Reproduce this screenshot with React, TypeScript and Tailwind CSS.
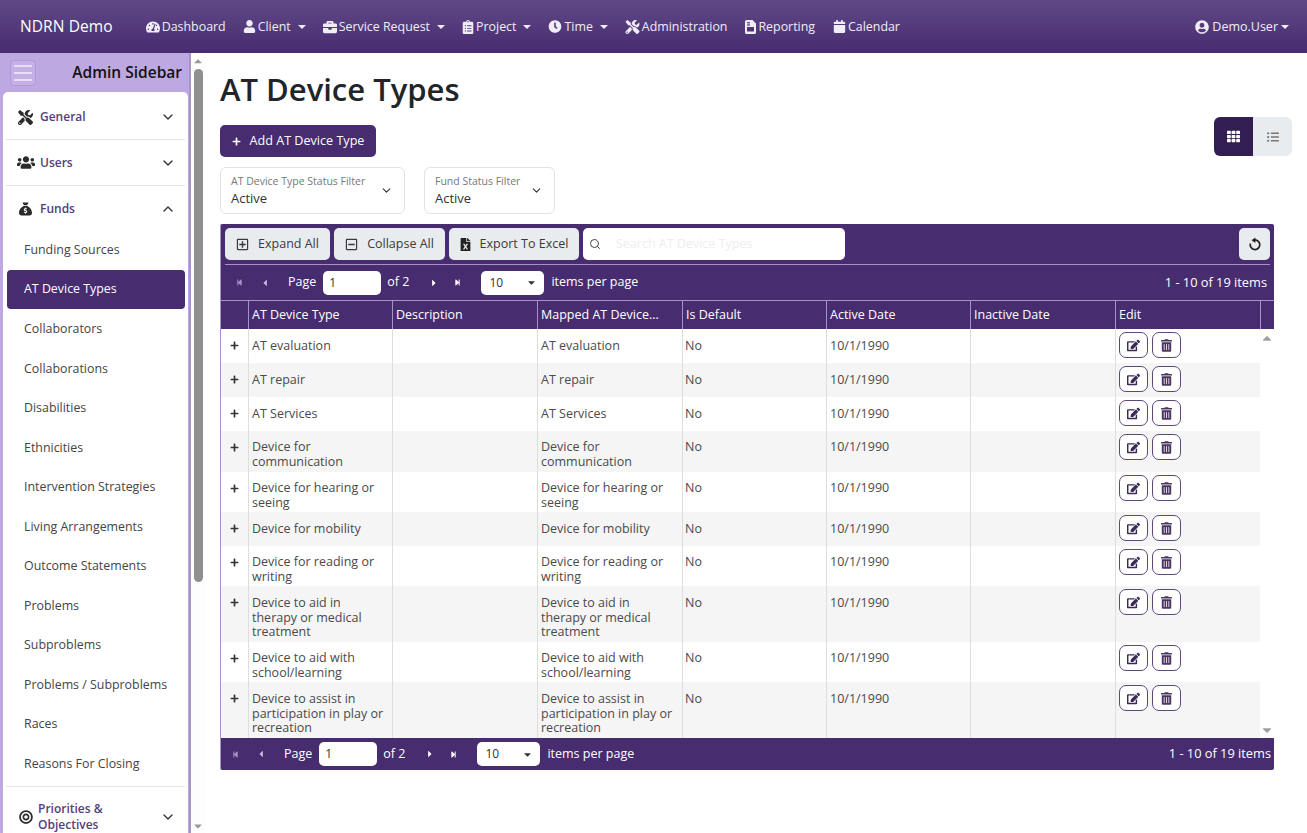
import { FaTachometerAlt, FaUser, FaBriefcase, FaClipboardList, FaClock, FaTools, FaCalendar, FaUserCircle, FaTh, FaListUl, FaUsers, FaBullseye, FaRegPlusSquare, FaRegMinusSquare, FaFileExcel, FaEdit, FaTrashAlt, FaPlus, FaStepBackward, FaStepForward, FaCaretLeft, FaCaretRight, FaCaretDown, FaCaretUp } from 'react-icons/fa';
import { FaSackDollar } from 'react-icons/fa6';
import { ChevronDown, ChevronUp, Search } from 'lucide-react';
import type { ReactNode } from 'react';

function ReportIcon() {
  return (
    <svg viewBox="0 0 11 14" className="w-[11px] h-[14px]">
      <path d="M1.5 0H7.5L11 3.5V12.5A1.5 1.5 0 0 1 9.5 14H1.5A1.5 1.5 0 0 1 0 12.5V1.5A1.5 1.5 0 0 1 1.5 0Z" fill="currentColor" />
      <rect x="2" y="7" width="7" height="4.5" fill="#4f3578" />
      <rect x="2" y="2.2" width="3" height="1.2" fill="#4f3578" />
      <rect x="2" y="4.4" width="3" height="1.2" fill="#4f3578" />
    </svg>
  );
}

function ReloadIcon() {
  return (
    <svg viewBox="0 0 14 14" className="w-[14px] h-[14px] text-[#222]">
      <path d="M5 3.4A4.8 4.8 0 1 1 2.4 6.4" fill="none" stroke="currentColor" strokeWidth="1.7" />
      <path d="M7.4 0.6V6L3.6 3.3Z" fill="currentColor" />
    </svg>
  );
}

function Caret() {
  return <span className="ml-[5px] w-0 h-0 border-x-[4px] border-x-transparent border-t-[4px] border-t-current" />;
}

const navItems: { label: string; icon: ReactNode; caret?: boolean; cls: string }[] = [
  { label: 'Dashboard', icon: <FaTachometerAlt className="w-[14px] h-[14px]" />, cls: 'ml-[33px]' },
  { label: 'Client', icon: <FaUser className="w-[13px] h-[13px]" />, caret: true, cls: 'ml-[17px]' },
  { label: 'Service Request', icon: <FaBriefcase className="w-[14px] h-[14px]" />, caret: true, cls: 'ml-[17px]' },
  { label: 'Project', icon: <FaClipboardList className="w-[12px] h-[14px]" />, caret: true, cls: 'ml-[17px]' },
  { label: 'Time', icon: <FaClock className="w-[14px] h-[13px]" />, caret: true, cls: 'ml-[17px]' },
  { label: 'Administration', icon: <FaTools className="w-[15px] h-[14px]" />, cls: 'ml-[17px]' },
  { label: 'Reporting', icon: <ReportIcon />, cls: 'ml-[18px]' },
  { label: 'Calendar', icon: <FaCalendar className="w-[13px] h-[13px]" />, cls: 'ml-[18px]' },
];

const subItems = ['Funding Sources', 'AT Device Types', 'Collaborators', 'Collaborations', 'Disabilities', 'Ethnicities', 'Intervention Strategies', 'Living Arrangements', 'Outcome Statements', 'Problems', 'Subproblems', 'Problems / Subproblems', 'Races', 'Reasons For Closing'];

const rows: { name: string[]; h: string }[] = [
  { name: ['AT evaluation'], h: 'h-[34px]' },
  { name: ['AT repair'], h: 'h-[34px]' },
  { name: ['AT Services'], h: 'h-[34px]' },
  { name: ['Device for', 'communication'], h: 'h-[41px]' },
  { name: ['Device for hearing or', 'seeing'], h: 'h-[40px]' },
  { name: ['Device for mobility'], h: 'h-[34px]' },
  { name: ['Device for reading or', 'writing'], h: 'h-[40px]' },
  { name: ['Device to aid in', 'therapy or medical', 'treatment'], h: 'h-[56px]' },
  { name: ['Device to aid with', 'school/learning'], h: 'h-[40px]' },
  { name: ['Device to assist in', 'participation in play or', 'recreation'], h: 'h-[56px]' },
];

const headers = [
  { label: 'AT Device Type', w: 'w-[144px]' },
  { label: 'Description', w: 'w-[145px]' },
  { label: 'Mapped AT Device...', w: 'w-[145px]' },
  { label: 'Is Default', w: 'w-[144px]' },
  { label: 'Active Date', w: 'w-[144px]' },
  { label: 'Inactive Date', w: 'w-[145px]' },
  { label: 'Edit', w: 'w-[145px]' },
];

function SideHead({ icon, label, open }: { icon: ReactNode; label: ReactNode; open?: boolean }) {
  return (
    <div className="flex items-center h-full pl-[9px] pr-[9px] text-[12px] font-semibold leading-[16px] text-[#54407c]">
      <span className="w-[21px] flex justify-center text-[#2b2b2b] shrink-0">{icon}</span>
      <span className="flex-1 ml-[4px]">{label}</span>
      {open ? <ChevronUp className="w-[16px] h-[16px] text-[#333]" /> : <ChevronDown className="w-[16px] h-[16px] text-[#333]" />}
    </div>
  );
}

function Pager({ offset }: { offset?: boolean }) {
  return (
    <div className={`flex items-center text-[12.5px] text-white ${offset ? 'pl-[11px] pr-[3px] h-[32px]' : 'pl-[15px] pr-[7px] h-[35px]'}`}>
      <FaStepBackward className="w-[7px] h-[7px] text-[#a594c2]" />
      <FaCaretLeft className="w-[10px] h-[10px] ml-[17px] text-[#c8bcdc]" />
      <span className="ml-[18px]">Page</span>
      <div className="ml-[7px] w-[58px] h-[24px] bg-white rounded-[5px] text-[#333] text-[12px] flex items-center pl-[6px]">1</div>
      <span className="ml-[6px]">of 2</span>
      <FaCaretRight className="w-[10px] h-[10px] ml-[20px] text-white" />
      <FaStepForward className="w-[7px] h-[7px] ml-[15px] text-white" />
      <div className="ml-[20px] w-[63px] h-[24px] bg-white rounded-[5px] text-[#333] text-[12px] flex items-center justify-between pl-[8px] pr-[7px]">
        <span>10</span>
        <FaCaretDown className="w-[11px] h-[11px] text-[#333]" />
      </div>
      <span className="ml-[7px]">items per page</span>
      <span className="ml-auto text-[12.8px]">1 - 10 of 19 items</span>
    </div>
  );
}

function ToolButton({ icon, label, w }: { icon: ReactNode; label: string; w: string }) {
  return (
    <div className={`${w} h-[32px] bg-[#e9ecef] rounded-[5px] flex items-center justify-center gap-[9px] text-[12.5px] text-[#3a3a3a]`}>
      {icon}
      <span>{label}</span>
    </div>
  );
}

export default function App() {
  return (
    <div className="w-[1307px] h-[833px] overflow-hidden bg-white font-['Open_Sans',sans-serif] flex flex-col">
      {/* Top nav */}
      <header className="h-[53px] shrink-0 bg-gradient-to-b from-[#604886] to-[#472c70] flex items-center pl-[20px] pr-[18px] text-white">
        <span className="text-[15.5px] tracking-[0.1px]">NDRN Demo</span>
        {navItems.map((n) => (
          <div key={n.label} className={`mt-[1px] flex items-center gap-[2px] text-[12.4px] text-[#f1edf7] ${n.cls}`}>
            {n.icon}
            <span>{n.label}</span>
            {n.caret && <Caret />}
          </div>
        ))}
        <div className="ml-auto mt-[1px] flex items-center gap-[3px] text-[12.5px] text-[#f1edf7]">
          <FaUserCircle className="w-[14px] h-[14px]" />
          <span>Demo.User</span>
          <span className="w-0 h-0 border-x-[4px] border-x-transparent border-t-[4px] border-t-current" />
        </div>
      </header>

      <div className="flex-1 flex min-h-0">
        {/* Sidebar */}
        <aside className="w-[191px] shrink-0 bg-[#bda8e1] flex flex-col overflow-hidden border-r-[2px] border-[#a596c6]">
          <div className="h-[39px] shrink-0 flex items-center pl-[10px] pr-[7px]">
            <div className="w-[26px] h-[26px] rounded-[4px] border border-[#b09ad8] bg-[#c4b0e6] flex flex-col justify-center gap-[5px] px-[3px]">
              <div className="h-[2px] bg-[#e8dff5]" />
              <div className="h-[2px] bg-[#e8dff5]" />
              <div className="h-[2px] bg-[#e8dff5]" />
            </div>
            <span className="ml-auto text-[15.5px] font-semibold text-[#111]">Admin Sidebar</span>
          </div>
          <div className="flex-1 ml-[3px] mr-[1px] bg-white rounded-t-[5px] overflow-hidden">
            <div className="h-[48px] pt-[3px] mx-[3px] border-b border-[#e6e6e6]"><SideHead icon={<FaTools className="w-[15px] h-[15px]" />} label="General" /></div>
            <div className="h-[46px] mx-[3px] border-b border-[#e6e6e6]"><SideHead icon={<FaUsers className="w-[18px] h-[15px]" />} label="Users" /></div>
            <div className="h-[45px] mx-[3px]"><SideHead icon={<FaSackDollar className="w-[13px] h-[14px]" />} label="Funds" open /></div>
            <div className="flex flex-col gap-[0.5px] pb-[2px]">
              {subItems.map((s) => (
                <div key={s} className={`h-[39px] ml-[4px] mr-[3px] pl-[17px] flex items-center text-[12.4px] rounded-[4px] ${s === 'AT Device Types' ? 'bg-[#472c70] text-white -translate-y-[1px]' : 'text-[#444]'}`}>
                  {s}
                </div>
              ))}
            </div>
            <div className="h-[62px] mx-[3px] border-t border-[#e6e6e6]">
              <SideHead icon={<FaBullseye className="w-[14px] h-[14px]" />} label={<span className="block w-[90px] -ml-[2px]">Priorities &amp; Objectives</span>} />
            </div>
          </div>
        </aside>

        {/* Page scrollbar */}
        <div className="w-[14px] shrink-0 flex flex-col items-center text-[#9a9a9a] bg-[#fdfdfd]">
          <FaCaretUp className="w-[12px] h-[12px] mt-[2px]" />
          <div className="w-[9px] h-[513px] mt-[2px] rounded-[5px] bg-[#8f8f8f]" />
          <FaCaretDown className="w-[12px] h-[12px] mt-auto mb-[1px]" />
        </div>

        {/* Main */}
        <main className="flex-1 min-w-0 pl-[15px] pr-[15px]">
          <div className="flex items-start">
            <div className="flex-1">
              <h1 className="mt-[14px] h-[44px] text-[31px] leading-[44px] font-semibold text-[#212529]">AT Device Types</h1>
              <div className="mt-[14px] w-[156px] h-[32px] bg-[#472c70] rounded-[5px] flex items-center justify-center gap-[9px] text-[12.6px] text-white">
                <FaPlus className="w-[9px] h-[9px]" />
                <span>Add AT Device Type</span>
              </div>
            </div>
            <div className="mt-[64px] flex h-[39px] rounded-[6px] overflow-hidden">
              <div className="w-[39px] bg-[#331e53] flex items-center justify-center"><FaTh className="w-[13px] h-[13px] text-white" /></div>
              <div className="w-[39px] bg-[#e9ecef] flex items-center justify-center"><FaListUl className="w-[12px] h-[12px] text-[#777]" /></div>
            </div>
          </div>

          <div className="mt-[10px] flex gap-[19px]">
            <div className="w-[185px] h-[47px] border border-[#e3e3e3] rounded-[6px] pl-[10px] pr-[11px] flex items-center">
              <div className="flex-1">
                <div className="text-[10.5px] leading-[14px] text-[#777] -mt-[1px] mb-[1px]">AT Device Type Status Filter</div>
                <div className="text-[13px] leading-[18px] text-[#333]">Active</div>
              </div>
              <ChevronDown className="w-[13px] h-[13px] text-[#333]" />
            </div>
            <div className="w-[131px] h-[47px] border border-[#e3e3e3] rounded-[6px] pl-[10px] pr-[11px] flex items-center">
              <div className="flex-1">
                <div className="text-[10.5px] leading-[14px] text-[#777] -mt-[1px] mb-[1px]">Fund Status Filter</div>
                <div className="text-[13px] leading-[18px] text-[#333]">Active</div>
              </div>
              <ChevronDown className="w-[13px] h-[13px] text-[#333]" />
            </div>
          </div>

          {/* Grid */}
          <div className="mt-[10px] w-[1054px] bg-[#472c70] rounded-[2px] overflow-hidden border-l border-[#a692c8]">
            <div className="mx-[4px] h-[41px] border-b border-[#a692c8] flex items-center gap-[4px]">
              <ToolButton w="w-[105px]" icon={<FaRegPlusSquare className="w-[13px] h-[13px]" />} label="Expand All" />
              <ToolButton w="w-[111px]" icon={<FaRegMinusSquare className="w-[13px] h-[13px]" />} label="Collapse All" />
              <ToolButton w="w-[130px]" icon={<FaFileExcel className="w-[11px] h-[13px] text-[#222]" />} label="Export To Excel" />
              <div className="w-[262px] h-[32px] bg-white rounded-[5px] flex items-center pl-[6px] text-[12.5px] text-[#eeeeee]">
                <Search className="w-[12px] h-[12px] text-[#444]" strokeWidth={2} />
                <span className="ml-[15px]">Search AT Device Types</span>
              </div>
              <div className="ml-auto w-[31px] h-[32px] bg-[#e9ecef] rounded-[5px] flex items-center justify-center">
                <ReloadIcon />
              </div>
            </div>
            <Pager />
            <div className="flex h-[29px] border-t border-[#a692c8] text-[12.5px] text-white">
              <div className="w-[27px] shrink-0" />
              {headers.map((h) => (
                <div key={h.label} className={`border-l border-[#a692c8] pl-[3px] flex items-center ${h.w}`}>
                  {h.label}
                </div>
              ))}
              <div className="border-l border-[#a692c8] flex-1" />
            </div>
            <div className="flex bg-white">
              <div className="w-[1039px] shrink-0">
                {rows.map((r, i) => {
                  const pad = r.name.length === 2 ? 'pt-[9px]' : 'pt-[10px]';
                  return (
                    <div key={r.name.join()} className={`flex text-[12.5px] leading-[14.6px] text-[#4a4a4a] ${r.h} ${i % 2 ? 'bg-[#f5f5f5]' : 'bg-white'}`}>
                      <div className="w-[27px] shrink-0 flex justify-center pt-[12px]"><FaPlus className="w-[9px] h-[9px] text-[#333]" /></div>
                      <div className={`w-[144px] border-l border-[#dedede] pl-[3px] ${pad}`}>{r.name.map((l) => <div key={l}>{l}</div>)}</div>
                      <div className="w-[145px] border-l border-[#dedede]" />
                      <div className={`w-[145px] border-l border-[#dedede] pl-[3px] ${pad}`}>{r.name.map((l) => <div key={l}>{l}</div>)}</div>
                      <div className={`w-[144px] border-l border-[#dedede] pl-[2px] ${pad}`}>No</div>
                      <div className={`w-[144px] border-l border-[#dedede] pl-[3px] ${pad}`}>10/1/1990</div>
                      <div className="w-[145px] border-l border-[#dedede]" />
                      <div className="w-[145px] border-l border-[#dedede] pl-[3px] pt-[3px] flex items-start gap-[4px]">
                        <div className="w-[29px] h-[26px] rounded-[7px] border border-[#5b4a78] bg-white flex items-center justify-center"><FaEdit className="w-[13px] h-[13px] text-[#3a2a55]" /></div>
                        <div className="w-[29px] h-[26px] rounded-[7px] border border-[#5b4a78] bg-white flex items-center justify-center"><FaTrashAlt className="w-[11px] h-[13px] text-[#4a3560]" /></div>
                      </div>
                    </div>
                  );
                })}
              </div>
              <div className="flex-1 flex flex-col items-center justify-between text-[#a0a0a0] py-[1px]">
                <FaCaretUp className="w-[14px] h-[14px] mt-[1px]" />
                <FaCaretDown className="w-[14px] h-[14px]" />
              </div>
            </div>
            <Pager offset />
          </div>
        </main>
      </div>
    </div>
  );
}
